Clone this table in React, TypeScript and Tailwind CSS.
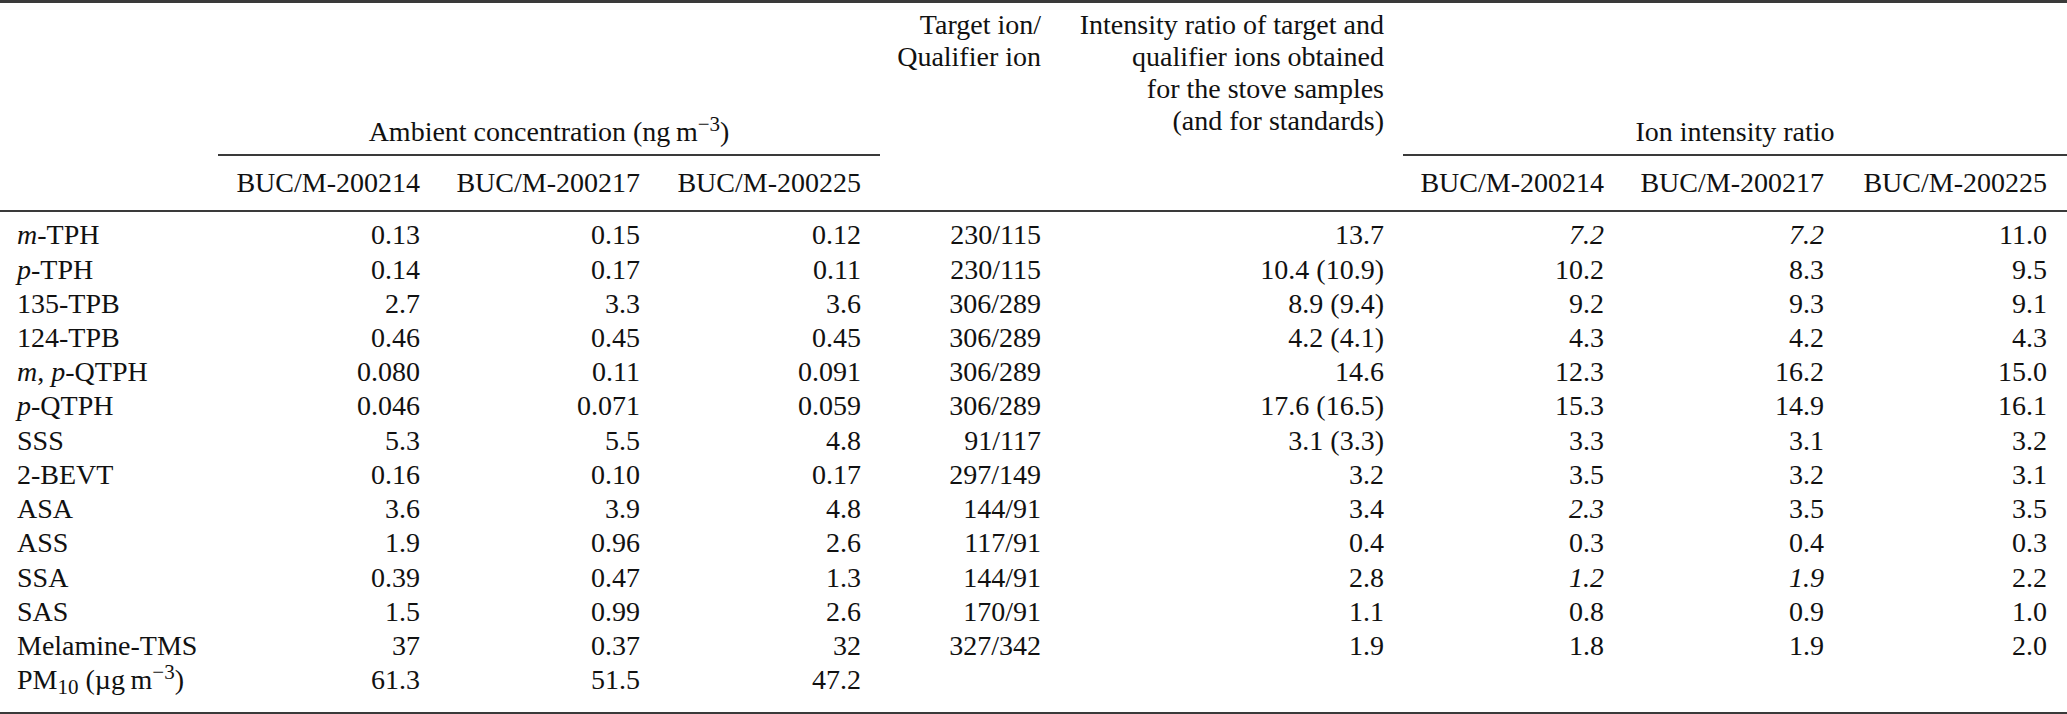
import type { ReactNode } from 'react';

const COLS = [
    'w-[218px] pl-[17px] text-left',
    'w-[221px] pr-[19px] text-right',
    'w-[220px] pr-[19px] text-right',
    'w-[221px] pr-[19px] text-right',
    'w-[180px] pr-[19px] text-right',
    'w-[343px] pr-[19px] text-right',
    'w-[220px] pr-[19px] text-right',
    'w-[220px] pr-[19px] text-right',
    'w-[224px] pr-[20px] text-right',
];

const it = (s: string) => <i>{s}</i>;

const ROWS: ReactNode[][] = [
    [<>{it('m')}-TPH</>, '0.13', '0.15', '0.12', '230/115', '13.7', it('7.2'), it('7.2'), '11.0'],
    [<>{it('p')}-TPH</>, '0.14', '0.17', '0.11', '230/115', '10.4 (10.9)', '10.2', '8.3', '9.5'],
    ['135-TPB', '2.7', '3.3', '3.6', '306/289', '8.9 (9.4)', '9.2', '9.3', '9.1'],
    ['124-TPB', '0.46', '0.45', '0.45', '306/289', '4.2 (4.1)', '4.3', '4.2', '4.3'],
    [<>{it('m')}, {it('p')}-QTPH</>, '0.080', '0.11', '0.091', '306/289', '14.6', '12.3', '16.2', '15.0'],
    [<>{it('p')}-QTPH</>, '0.046', '0.071', '0.059', '306/289', '17.6 (16.5)', '15.3', '14.9', '16.1'],
    ['SSS', '5.3', '5.5', '4.8', '91/117', '3.1 (3.3)', '3.3', '3.1', '3.2'],
    ['2-BEVT', '0.16', '0.10', '0.17', '297/149', '3.2', '3.5', '3.2', '3.1'],
    ['ASA', '3.6', '3.9', '4.8', '144/91', '3.4', it('2.3'), '3.5', '3.5'],
    ['ASS', '1.9', '0.96', '2.6', '117/91', '0.4', '0.3', '0.4', '0.3'],
    ['SSA', '0.39', '0.47', '1.3', '144/91', '2.8', it('1.2'), it('1.9'), '2.2'],
    ['SAS', '1.5', '0.99', '2.6', '170/91', '1.1', '0.8', '0.9', '1.0'],
    ['Melamine-TMS', '37', '0.37', '32', '327/342', '1.9', '1.8', '1.9', '2.0'],
    [
        <>
            PM<sub>10</sub> (µg{'\u2009'}m<sup>−3</sup>)
        </>,
        '61.3',
        '51.5',
        '47.2',
        '',
        '',
        '',
        '',
        '',
    ],
];

const SAMPLES = ['BUC/M-200214', 'BUC/M-200217', 'BUC/M-200225'];

function SpannerGroup({ title, cols }: { title: ReactNode; cols: string[] }) {
    return (
        <div className="flex flex-col">
            <div className="flex-1 flex items-end justify-center pb-[6px] leading-[32px]">{title}</div>
            <div className="h-[1.5px] bg-[#3a3a3a]" />
            <div className="flex h-[54.5px] pt-[11px] leading-[32px]">
                {SAMPLES.map((s, i) => (
                    <div key={s} className={`shrink-0 whitespace-nowrap ${cols[i]}`}>
                        {s}
                    </div>
                ))}
            </div>
        </div>
    );
}

export default function App() {
    return (
        <div className="w-[2067px] h-[714px] overflow-hidden bg-white text-[#111] text-[28px] font-['Liberation_Serif','Times_New_Roman',serif]">
            <div className="h-[2.5px] bg-[#3a3a3a]" />

            <div className="flex h-[207.5px]">
                <div className={`shrink-0 ${COLS[0]}`} />
                <SpannerGroup
                    title={
                        <span>
                            Ambient concentration (ng{'\u2009'}m<sup>−3</sup>)
                        </span>
                    }
                    cols={COLS.slice(1, 4)}
                />
                <div className={`shrink-0 pt-[6px] leading-[32px] ${COLS[4]}`}>
                    Target ion/
                    <br />
                    Qualifier ion
                </div>
                <div className={`shrink-0 pt-[6px] leading-[32px] ${COLS[5]}`}>
                    Intensity ratio of target and
                    <br />
                    qualifier ions obtained
                    <br />
                    for the stove samples
                    <br />
                    (and for standards)
                </div>
                <SpannerGroup title="Ion intensity ratio" cols={COLS.slice(6, 9)} />
            </div>

            <div className="h-[2px] bg-[#3a3a3a]" />

            <div className="pt-[6.4px] pb-[14.4px]">
                {ROWS.map((row, r) => (
                    <div key={r} className="flex h-[34.23px] leading-[34.23px]">
                        {row.map((cell, c) => (
                            <div key={c} className={`shrink-0 whitespace-nowrap ${COLS[c]}`}>
                                {cell}
                            </div>
                        ))}
                    </div>
                ))}
            </div>

            <div className="h-[2px] bg-[#3a3a3a]" />
        </div>
    );
}
